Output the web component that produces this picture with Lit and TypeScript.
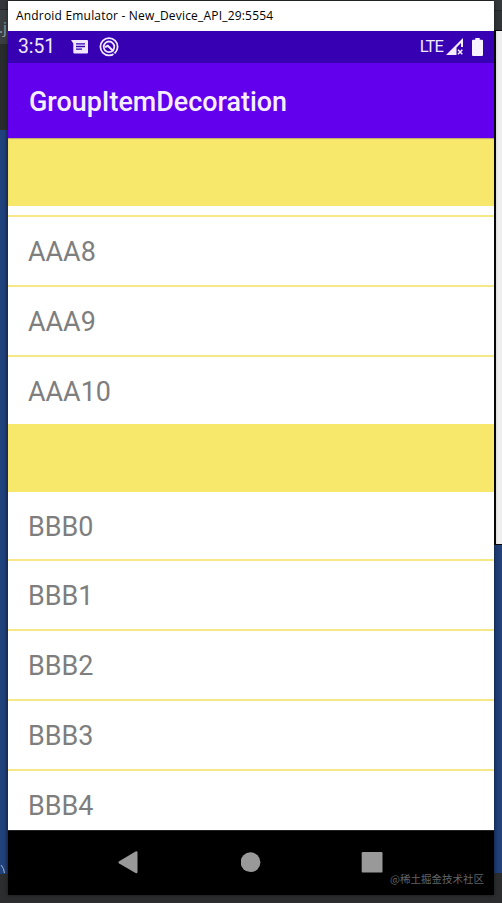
import { LitElement, html, css, svg } from "lit";
import { customElement } from "lit/decorators.js";

const groupA = ["AAA8", "AAA9", "AAA10"];
const groupB = ["BBB0", "BBB1", "BBB2", "BBB3", "BBB4"];

@customElement("app-root")
export class AppRoot extends LitElement {
  static styles = css`
    :host {
      display: grid;
      grid-template-columns: 8px 486px 8px;
      width: 502px;
      height: 903px;
      overflow: hidden;
      background: #2b2d2f;
      font-family: Roboto, sans-serif;
    }
    .side {
      display: flex;
      flex-direction: column;
      overflow: hidden;
    }
    .tab {
      height: 9px;
      border-bottom: 1px solid #242628;
      background: #35373a;
    }
    .file {
      height: 34px;
      font: 15px/35px "Noto Sans", sans-serif;
      color: #97999b;
      background: #3b3e40;
      white-space: nowrap;
      text-indent: -1px;
    }
    .gap { height: 86px; background: #282c2d; }
    .desktop {
      height: 744px;
      background: linear-gradient(90deg, #1f427c 0 4px, #223463);
      display: flex;
      align-items: flex-end;
    }
    .desktop.right { height: 328px; background: linear-gradient(90deg, #1e3a74, #24437b); }
    .desktop svg { display: block; }
    .top-right { height: 30px; background: linear-gradient(#35393b 10px, #25282a 10px 11px, #303436 11px); }
    .panel {
      height: 513px;
      box-sizing: content-box;
      border: solid #08080a;
      border-width: 1px 0 1px 2px;
      background: #eeeeee;
    }
    .window {
      display: flex;
      flex-direction: column;
      height: 894px;
      margin-top: 1px;
      background: #fff;
      box-shadow: 0 0 4px #0008;
      z-index: 1;
    }
    .caption {
      height: 30px;
      box-sizing: border-box;
      padding-left: 8px;
      font: 12px/30px "Open Sans", "Noto Sans", sans-serif;
      letter-spacing: 0.19px;
      color: #000;
      white-space: pre;
    }
    .status {
      display: flex;
      align-items: center;
      height: 32px;
      background: #3700b3;
      color: #f1e8ff;
    }
    .status svg { display: block; flex: none; }
    .time { width: 63px; padding-left: 10px; box-sizing: border-box; font-size: 19.3px; line-height: 34px; }
    .mail { margin-right: 10px; }
    .lte { margin-left: auto; font-size: 16.5px; letter-spacing: -0.9px; line-height: 32px; }
    .signal { margin: 0 8px 0 3px; }
    .battery { margin-right: 11px; }
    .appbar {
      height: 75px;
      padding-left: 21px;
      font-size: 26.9px;
      line-height: 78px;
      font-weight: 500;
      color: #f6efff;
      background: #6200ee;
    }
    .list { display: flex; flex-direction: column; height: 692px; overflow: hidden; }
    .head { flex: none; height: 67.4px; background: #f7e86c; }
    .head.first { height: 68px; box-shadow: inset 0 1px 1px #b7a86a; }
    .rest { flex: none; height: 9px; }
    .row {
      flex: none;
      height: 67.75px;
      padding-left: 20px;
      border-top: 2px solid #f6e985;
      font-size: 26.9px;
      line-height: 71.8px;
      color: #7e7e7e;
    }
    .head + .row.plain { border-top: 0; }
    .nav {
      display: grid;
      grid-template-columns: 110px 123px 120px 1fr;
      height: 65px;
      box-sizing: border-box;
      background: #000;
      border-top: 1px solid #222;
      position: relative;
    }
    .nav svg { display: block; margin-top: 20px; }
    .mark {
      position: absolute;
      right: 10px;
      bottom: 9px;
      font: 10.5px/15px "Noto Sans CJK SC", sans-serif;
      color: #646464;
      white-space: nowrap;
    }
  `;

  private row(label: string, plain = false) {
    return html`<div class="row ${plain ? "plain" : ""}">${label}</div>`;
  }

  private button(shape: unknown) {
    return html`<svg width="24" height="24" viewBox="0 0 24 24" fill="#999">${shape}</svg>`;
  }

  render() {
    return html`
      <div class="side">
        <div class="tab"></div>
        <div class="file">.j</div>
        <div class="gap"></div>
        <div class="desktop">
          <svg width="8" height="10" viewBox="0 0 8 10" fill="none" stroke="#a9bad4" stroke-width="1">
            <path d="M1 1Q4 4 4.5 9" />
          </svg>
        </div>
      </div>
      <main class="window">
        <div class="caption">Android Emulator - New_Device_API_29:5554</div>
        <div class="status">
          <span class="time">3:51</span>
          <svg class="mail" width="18" height="16" viewBox="0 0 18 16">
            <path fill="#f1e8ff" d="M0 1H16Q17 1 17 2V13.5Q17 14.5 16 14.5H3.5Q2.3 14.5 2.3 13.3V4.5Z" />
            <path stroke="#3700b3" stroke-width="1.3" d="M5 4.8H14M5 7.5H14M5 10.2H11" />
          </svg>
          <svg width="20" height="20" viewBox="0 0 20 20" fill="none" stroke="#f1e8ff">
            <circle cx="10" cy="9.8" r="8.6" stroke-width="1.8" />
            <circle cx="10" cy="9.8" r="5.3" stroke-width="1.8" />
            <path stroke-width="2" d="M6 10.2L8.8 8.8L14.5 14.2" />
            <path stroke="#3700b3" stroke-width="1.2" d="M14.3 16.2L17.5 19" />
          </svg>
          <span class="lte">LTE</span>
          <svg class="signal" width="18" height="18" viewBox="0 0 18 18">
            <path fill="#f4edff" fill-rule="evenodd" d="M0 17L17 0V9H15V5L10.5 9.5V17Z" />
            <path stroke="#f4edff" stroke-width="1.5" d="M12 11.7L16.3 16.3M16.3 11.7L12 16.3" />
          </svg>
          <svg class="battery" width="11" height="18" viewBox="0 0 11 18" fill="#f8f2ff">
            <path d="M3.3 0H7.7V1.7H10Q11 1.7 11 2.7V17Q11 18 10 18H1Q0 18 0 17V2.7Q0 1.7 1 1.7H3.3Z" />
          </svg>
        </div>
        <div class="appbar">GroupItemDecoration</div>
        <div class="list">
          <div class="head first"></div>
          <div class="rest"></div>
          ${groupA.map((t) => this.row(t))}
          <div class="head"></div>
          ${groupB.map((t, i) => this.row(t, i === 0))}
        </div>
        <div class="nav">
          <span></span>
          ${this.button(svg`<path d="M1.2 10.2L17.5 0.4Q19.5-.2 19.5 1.5V21Q19.5 23 17.5 22L1.2 12.4Q-.5 11.3 1.2 10.2Z" />`)}
          ${this.button(svg`<circle cx="9.5" cy="11.2" r="9.9" />`)}
          ${this.button(svg`<rect x="0.7" y="1" width="20.8" height="20.6" rx="1.2" />`)}
          <span class="mark">@稀土掘金技术社区</span>
        </div>
      </main>
      <div class="side">
        <div class="top-right"></div>
        <div class="panel"></div>
        <div class="desktop right"></div>
      </div>
    `;
  }
}
